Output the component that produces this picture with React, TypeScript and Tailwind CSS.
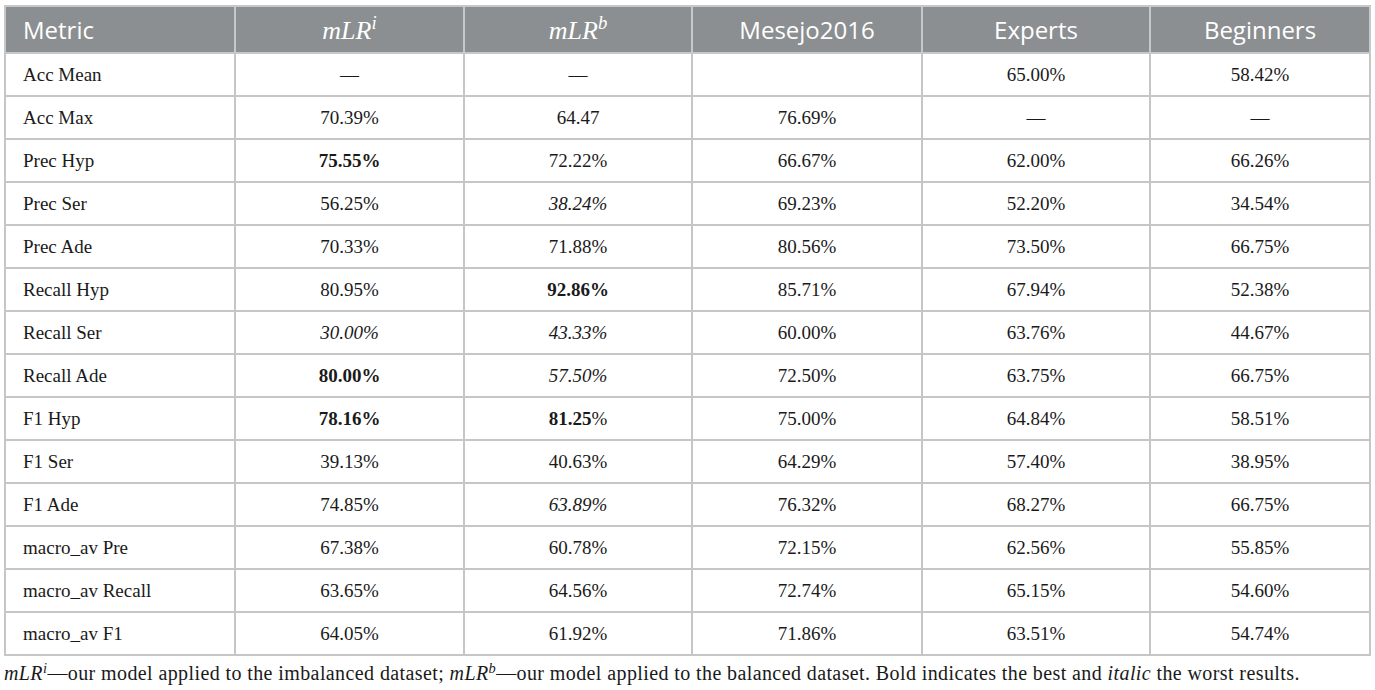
import React from "react";

type Cell = { t: string; s?: "b" | "i" | "bp" };

const rows: [string, Cell[]][] = [
  ["Acc Mean", [{ t: "—" }, { t: "—" }, { t: "" }, { t: "65.00%" }, { t: "58.42%" }]],
  ["Acc Max", [{ t: "70.39%" }, { t: "64.47" }, { t: "76.69%" }, { t: "—" }, { t: "—" }]],
  ["Prec Hyp", [{ t: "75.55%", s: "b" }, { t: "72.22%" }, { t: "66.67%" }, { t: "62.00%" }, { t: "66.26%" }]],
  ["Prec Ser", [{ t: "56.25%" }, { t: "38.24%", s: "i" }, { t: "69.23%" }, { t: "52.20%" }, { t: "34.54%" }]],
  ["Prec Ade", [{ t: "70.33%" }, { t: "71.88%" }, { t: "80.56%" }, { t: "73.50%" }, { t: "66.75%" }]],
  ["Recall Hyp", [{ t: "80.95%" }, { t: "92.86%", s: "b" }, { t: "85.71%" }, { t: "67.94%" }, { t: "52.38%" }]],
  ["Recall Ser", [{ t: "30.00%", s: "i" }, { t: "43.33%", s: "i" }, { t: "60.00%" }, { t: "63.76%" }, { t: "44.67%" }]],
  ["Recall Ade", [{ t: "80.00%", s: "b" }, { t: "57.50%", s: "i" }, { t: "72.50%" }, { t: "63.75%" }, { t: "66.75%" }]],
  ["F1 Hyp", [{ t: "78.16%", s: "b" }, { t: "81.25", s: "bp" }, { t: "75.00%" }, { t: "64.84%" }, { t: "58.51%" }]],
  ["F1 Ser", [{ t: "39.13%" }, { t: "40.63%" }, { t: "64.29%" }, { t: "57.40%" }, { t: "38.95%" }]],
  ["F1 Ade", [{ t: "74.85%" }, { t: "63.89%", s: "i" }, { t: "76.32%" }, { t: "68.27%" }, { t: "66.75%" }]],
  ["macro_av Pre", [{ t: "67.38%" }, { t: "60.78%" }, { t: "72.15%" }, { t: "62.56%" }, { t: "55.85%" }]],
  ["macro_av Recall", [{ t: "63.65%" }, { t: "64.56%" }, { t: "72.74%" }, { t: "65.15%" }, { t: "54.60%" }]],
  ["macro_av F1", [{ t: "64.05%" }, { t: "61.92%" }, { t: "71.86%" }, { t: "63.51%" }, { t: "54.74%" }]],
];

function Val({ c }: { c: Cell }) {
  if (c.s === "b") return <span className="font-bold">{c.t}</span>;
  if (c.s === "i") return <span className="italic">{c.t}</span>;
  if (c.s === "bp")
    return (
      <span>
        <span className="font-bold">{c.t}</span>%
      </span>
    );
  return <span>{c.t}</span>;
}

function MLR({ sup }: { sup: string }) {
  return (
    <span className="italic font-['Liberation_Serif',serif]">
      mLR<sup className="text-[0.72em]">{sup}</sup>
    </span>
  );
}

export default function App() {
  return (
    <div className="w-[1375px] h-[690px] bg-white pl-[4px] pt-[5px] font-['Liberation_Serif',serif] text-[#1a1a1a]">
      <table className="table-fixed border-collapse w-[1365px]">
        <colgroup>
          <col className="w-[230px]" />
          <col className="w-[229px]" />
          <col className="w-[228px]" />
          <col className="w-[230px]" />
          <col className="w-[228px]" />
          <col className="w-[220px]" />
        </colgroup>
        <thead>
          <tr className="bg-[#8b8f92] text-white font-['Open_Sans',sans-serif] text-[24px]">
            <th className="h-[47px] border-2 border-[#c6c8ca] font-normal text-left pl-[17px] leading-none">Metric</th>
            <th className="border-2 border-[#c6c8ca] font-normal text-center text-[26px] leading-none"><MLR sup="i" /></th>
            <th className="border-2 border-[#c6c8ca] font-normal text-center text-[26px] leading-none"><MLR sup="b" /></th>
            <th className="border-2 border-[#c6c8ca] font-normal text-center leading-none">Mesejo2016</th>
            <th className="border-2 border-[#c6c8ca] font-normal text-center leading-none">Experts</th>
            <th className="border-2 border-[#c6c8ca] font-normal text-center leading-none">Beginners</th>
          </tr>
        </thead>
        <tbody className="text-[19px]">
          {rows.map(([name, cells]) => (
            <tr key={name}>
              <td className="h-[43px] border-2 border-[#c6c6c6] pl-[17px] leading-none">{name}</td>
              {cells.map((c, i) => (
                <td key={i} className="border-2 border-[#c6c6c6] text-center leading-none">
                  <Val c={c} />
                </td>
              ))}
            </tr>
          ))}
        </tbody>
      </table>
      <p className="mt-[7px] text-[20px] leading-none text-[#1a1a1a] tracking-[0.4px]">
        <MLR sup="i" />—our model applied to the imbalanced dataset; <MLR sup="b" />—our model applied to the balanced
        dataset. Bold indicates the best and <span className="italic">italic</span> the worst results.
      </p>
    </div>
  );
}
